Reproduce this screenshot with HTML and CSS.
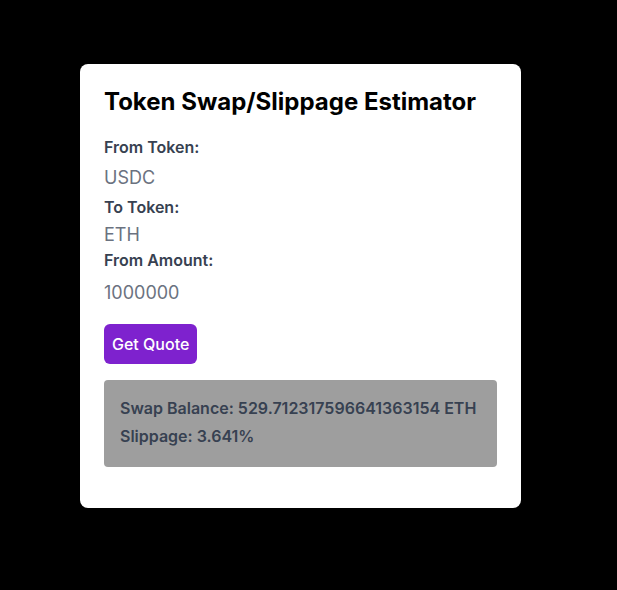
FILE: index.html
```html
<!DOCTYPE html>
<html lang="en">
<head>
<meta charset="utf-8">
<title>Token Swap/Slippage Estimator</title>
<link rel="stylesheet" href="styles.css">
</head>
<body>
<main class="page">
  <section class="card">
    <h1 class="title">Token Swap/Slippage Estimator</h1>
    <label class="label label-first">From Token:</label>
    <div class="value value-1">USDC</div>
    <label class="label label-2">To Token:</label>
    <div class="value value-2">ETH</div>
    <label class="label label-3">From Amount:</label>
    <div class="value value-3">1000000</div>
    <button class="btn" type="button">Get Quote</button>
    <div class="result">
      <p class="result-line">Swap Balance: 529.712317596641363154 ETH</p>
      <p class="result-line result-line-2">Slippage: 3.641%</p>
    </div>
  </section>
</main>
</body>
</html>
```
FILE: styles.css
```css
html, body {
  margin: 0;
  padding: 0;
  background: #000;
}
body {
  font-family: Inter, "Noto Sans", "Liberation Sans", sans-serif;
  width: 617px;
  height: 590px;
}
.page {
  padding: 64px 0 0 80px;
}
.card {
  box-sizing: border-box;
  width: 441px;
  background: #fff;
  border-radius: 8px;
  padding: 24px 24px 41px 24px;
  display: flex;
  flex-direction: column;
  align-items: flex-start;
}
.title {
  margin: 0;
  font-size: 24px;
  line-height: 28px;
  font-weight: 700;
  color: #000;
}
.label {
  display: block;
  font-size: 16px;
  line-height: 20px;
  font-weight: 600;
  color: #374151;
}
.label-first { margin-top: 21px; }
.label-2 { margin-top: 5px; }
.label-3 { margin-top: 1px; }
.value {
  font-size: 18px;
  line-height: 28px;
  color: #6b7280;
}
.value-1 { margin-top: 7px; }
.value-2 { margin-top: 4px; }
.value-3 { margin-top: 9px; }
.btn {
  margin-top: 17px;
  height: 40px;
  padding: 0 8px;
  border: none;
  border-radius: 6px;
  background: #7e22ce;
  color: #fff;
  font-family: inherit;
  font-size: 16px;
  font-weight: 500;
  cursor: pointer;
}
.result {
  box-sizing: border-box;
  align-self: stretch;
  margin-top: 16px;
  background: #9e9e9e;
  border-radius: 4px;
  padding: 16px 16px 19px 16px;
  display: flex;
  flex-direction: column;
  gap: 4px;
}
.result-line {
  margin: 0;
  font-size: 16px;
  line-height: 24px;
  font-weight: 600;
  color: #374151;
}
```
